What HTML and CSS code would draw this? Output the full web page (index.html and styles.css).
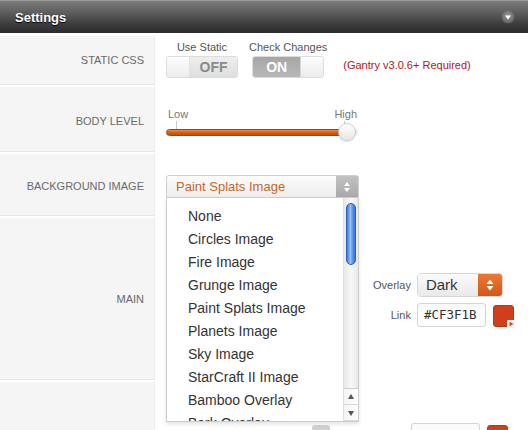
FILE: index.html
```html
<!DOCTYPE html>
<html>
<head>
  <title>Settings</title>
  <link rel="stylesheet" href="styles.css">
</head>
<body>
  <div class="panel">
    <div class="panel-head">
      <h2>Settings</h2>
      <span class="head-toggle">
        <svg width="12" height="12" viewBox="0 0 12 12"><polygon points="3,4.5 9,4.5 6,8.5" fill="#fff"/></svg>
      </span>
    </div>

    <div class="row row-static">
      <div class="row-label">STATIC CSS</div>
      <div class="row-body static-body">
        <div class="switch-group">
          <span class="switch-title">Use Static</span>
          <div class="switch switch-off">
            <span class="switch-blank"></span>
            <span class="switch-text">OFF</span>
          </div>
        </div>
        <div class="switch-group">
          <span class="switch-title">Check Changes</span>
          <div class="switch switch-on">
            <span class="switch-text">ON</span>
            <span class="switch-blank"></span>
          </div>
        </div>
        <span class="note">(Gantry v3.0.6+ Required)</span>
      </div>
    </div>

    <div class="row row-level">
      <div class="row-label">BODY LEVEL</div>
      <div class="row-body level-body">
        <div class="slider">
          <div class="slider-marks">
            <span class="mark">Low</span>
            <span class="mark mark-high">High</span>
          </div>
          <div class="slider-track">
            <div class="slider-fill"></div>
            <div class="slider-knob"></div>
          </div>
        </div>
      </div>
    </div>

    <div class="row row-bg">
      <div class="row-label">BACKGROUND IMAGE</div>
      <div class="row-body bg-body">
        <div class="select-wrap">
          <div class="select">
            <span class="select-value">Paint Splats Image</span>
            <span class="select-arrows">
              <svg width="8" height="12" viewBox="0 0 8 12"><polygon points="1,5 7,5 4,1" fill="#fff"/><polygon points="1,7 7,7 4,11" fill="#fff"/></svg>
            </span>
          </div>
          <div class="select-list">
            <ul>
              <li>None</li>
              <li>Circles Image</li>
              <li>Fire Image</li>
              <li>Grunge Image</li>
              <li>Paint Splats Image</li>
              <li>Planets Image</li>
              <li>Sky Image</li>
              <li>StarCraft II Image</li>
              <li>Bamboo Overlay</li>
              <li>Bark Overlay</li>
            </ul>
            <div class="scrollbar">
              <div class="scroll-thumb"></div>
              <div class="scroll-btn scroll-up">
                <svg width="8" height="8" viewBox="0 0 8 8"><polygon points="1,6 7,6 4,1" fill="#555"/></svg>
              </div>
              <div class="scroll-btn scroll-down">
                <svg width="8" height="8" viewBox="0 0 8 8"><polygon points="1,2 7,2 4,7" fill="#555"/></svg>
              </div>
            </div>
          </div>
        </div>
      </div>
    </div>

    <div class="row row-main">
      <div class="row-label">MAIN</div>
      <div class="row-body main-body">
        <div class="field-grid">
          <span class="field-label">Overlay</span>
          <div class="mini-select">
            <span class="mini-value">Dark</span>
            <span class="mini-arrows">
              <svg width="8" height="14" viewBox="0 0 8 14"><polygon points="0.5,6 7.5,6 4,1.5" fill="#fff"/><polygon points="0.5,8 7.5,8 4,12.5" fill="#fff"/></svg>
            </span>
          </div>
          <span class="field-label">Link</span>
          <div class="color-field">
            <span class="color-input">#CF3F1B</span>
            <span class="swatch">
              <svg class="swatch-corner" width="8" height="8" viewBox="0 0 8 8"><rect width="8" height="8" rx="1" fill="#f3f3f3"/><polygon points="2.5,1.5 6.5,4 2.5,6.5" fill="#d2501e"/></svg>
            </span>
          </div>
        </div>
      </div>
    </div>

    <div class="row row-next">
      <div class="row-label"></div>
      <div class="row-body next-body">
        <span class="hidden-btn"></span>
        <div class="color-field">
          <span class="color-input"></span>
          <span class="swatch"></span>
        </div>
      </div>
    </div>
  </div>
</body>
</html>
```

FILE: styles.css
```css
/* Podstawa */
body {
  margin: 0;
  font-family: "Liberation Sans", Arial, sans-serif;
  background-color: #fff;
  overflow: hidden;
}

.panel {
  width: 528px;
}

/* Naglowek */
.panel-head {
  height: 33px;
  box-sizing: border-box;
  border-top: 1px solid #9a9a9a;
  background: linear-gradient(#7c7c7c, #5e5e5e 35%, #3a3a3a 75%, #2c2c2c);
  display: flex;
  align-items: center;
  justify-content: space-between;
  padding: 0 14px 0 15px;
}

.panel-head h2 {
  margin: 0;
  font-size: 13px;
  color: #fff;
  text-shadow: 0 1px 1px #000;
}

.head-toggle {
  width: 12px;
  height: 12px;
  border-radius: 50%;
  background: radial-gradient(circle at 50% 40%, #9a9a9a, #555);
  box-shadow: 0 0 1px #aaa;
  display: flex;
}

/* Wiersze */
.row {
  display: grid;
  grid-template-columns: 155px 1fr;
}

.row-label {
  background-color: #f5f5f5;
  border-top: 2px solid #fff;
  border-bottom: 1px solid #e6e6e6;
  border-right: 1px solid #ececec;
  display: flex;
  align-items: center;
  justify-content: flex-end;
  padding-right: 10px;
  font-size: 11px;
  color: #6a6a6a;
}

.row-body {
  padding-left: 11px;
}

.row-static { height: 51px; margin-top: 1px; }
.row-level { height: 67px; }
.row-level .row-label { padding-top: 4px; }
.row-bg { height: 64px; }
.row-bg .row-label { padding-top: 2px; }
.row-main { height: 164px; }
.row-next { height: 60px; }

/* Przelaczniki */
.static-body {
  display: flex;
  gap: 11px;
  padding-top: 7px;
}

.switch-group {
  display: flex;
  flex-direction: column;
  align-items: center;
  gap: 2px;
}

.switch-title {
  font-size: 11px;
  line-height: 13px;
  color: #555;
}

.switch {
  width: 72px;
  height: 22px;
  box-sizing: border-box;
  border: 1px solid #dcdcdc;
  border-radius: 3px;
  display: flex;
  overflow: hidden;
}

.switch-blank {
  width: 22px;
  background: linear-gradient(#fdfdfd, #ececec);
}

.switch-text {
  flex: 1;
  display: flex;
  align-items: center;
  justify-content: center;
  font-size: 14px;
  font-weight: bold;
}

.switch-off .switch-text {
  color: #8a8a8a;
  background: linear-gradient(#eeeeee, #dedede);
  border-left: 1px solid #e2e2e2;
}

.switch-on .switch-text {
  color: #fff;
  background: linear-gradient(#a6a6a6, #b8b8b8);
  border-right: 1px solid #d6d6d6;
}

.note {
  font-size: 11px;
  color: #b2121a;
  margin-top: 18px;
  margin-left: 5px;
}

/* Suwak */
.level-body {
  padding-top: 22px;
}

.slider {
  width: 192px;
}

.slider-marks {
  display: flex;
  justify-content: space-between;
  font-size: 11px;
  color: #777;
}

.mark {
  position: relative;
  padding-left: 2px;
  line-height: 14px;
  height: 22px;
}

.mark::after {
  content: "";
  position: absolute;
  left: 10px;
  top: 14px;
  width: 1px;
  height: 8px;
  background-color: #c8c8c8;
}

.mark-high {
  padding-right: 1px;
}

.mark-high::after {
  left: 12px;
}

.slider-track {
  position: relative;
  height: 7px;
  border-radius: 4px;
  background: linear-gradient(#e4e4e4, #f4f4f4);
}

.slider-fill {
  width: 184px;
  height: 7px;
  box-sizing: border-box;
  border: 1px solid #a8400c;
  border-radius: 4px;
  background: linear-gradient(#f08a40, #d65e18 50%, #c24c0c);
}

.slider-knob {
  position: absolute;
  left: 172px;
  top: -6px;
  width: 18px;
  height: 18px;
  box-sizing: border-box;
  border-radius: 50%;
  border: 1px solid #cfcfcf;
  background: linear-gradient(#fff, #e6e6e6);
  box-shadow: 0 1px 1px rgba(0, 0, 0, 0.15);
}

/* Lista wyboru */
.bg-body {
  padding-top: 23px;
}

.select-wrap {
  position: relative;
  width: 193px;
}

.select {
  height: 23px;
  box-sizing: border-box;
  border: 1px solid #cfcfcf;
  border-radius: 3px 3px 0 0;
  display: flex;
  background: linear-gradient(#fdfdfd, #ededed);
}

.select-value {
  flex: 1;
  font-size: 13px;
  color: #c8661f;
  padding-left: 9px;
  line-height: 21px;
}

.select-arrows {
  width: 22px;
  background: linear-gradient(#c2c2c2, #a9a9a9);
  display: flex;
  align-items: center;
  justify-content: center;
}

.select-list {
  position: absolute;
  top: 23px;
  left: 0;
  width: 193px;
  height: 224px;
  box-sizing: border-box;
  border: 1px solid #cdcdcd;
  border-top: none;
  background-color: #fff;
  box-shadow: 0 2px 4px rgba(0, 0, 0, 0.12);
  overflow: hidden;
  z-index: 2;
}

.select-list ul {
  list-style: none;
  margin: 0;
  padding: 7px 0 0 21px;
}

.select-list li {
  font-size: 14px;
  line-height: 23px;
  color: #333;
  white-space: nowrap;
}

.scrollbar {
  position: absolute;
  top: 0;
  right: 0;
  bottom: 0;
  width: 14px;
  background: linear-gradient(90deg, #e8e8e8, #f8f8f8 50%, #e8e8e8);
  border-left: 1px solid #e0e0e0;
  display: flex;
  flex-direction: column;
  align-items: center;
}

.scroll-thumb {
  margin-top: 5px;
  width: 10px;
  height: 62px;
  box-sizing: border-box;
  border: 1px solid #2a5ec8;
  border-radius: 5px;
  background: linear-gradient(90deg, #3f78de, #9cc2f6 45%, #6a9ff0 60%, #3570d8);
}

.scroll-up {
  margin-top: auto;
  border-top: 1px solid #cfcfcf;
}

.scroll-btn {
  width: 14px;
  height: 15px;
  display: flex;
  align-items: center;
  justify-content: center;
  background: linear-gradient(90deg, #f4f4f4, #fff);
  border-bottom: 1px solid #d8d8d8;
}

/* Kolory */
.main-body {
  padding-left: 218px;
  padding-top: 57px;
}

.field-grid {
  display: grid;
  grid-template-columns: auto auto;
  column-gap: 6px;
  row-gap: 6px;
  align-items: center;
  justify-content: start;
}

.field-label {
  justify-self: end;
  font-size: 11px;
  color: #555;
}

.mini-select {
  width: 86px;
  height: 24px;
  box-sizing: border-box;
  border: 1px solid #d6d6d6;
  border-radius: 4px;
  display: flex;
  overflow: hidden;
}

.mini-value {
  flex: 1;
  font-size: 15px;
  color: #333;
  padding-left: 8px;
  line-height: 22px;
  background: linear-gradient(#fbfbfb, #e9e9e9);
}

.mini-arrows {
  width: 24px;
  display: flex;
  align-items: center;
  justify-content: center;
  background: linear-gradient(#ec7a32, #d2561a);
}

.color-field {
  display: flex;
  gap: 7px;
  align-items: center;
}

.color-input {
  width: 69px;
  height: 24px;
  box-sizing: border-box;
  border: 1px solid #d4d4d4;
  border-radius: 3px;
  font-family: "DejaVu Sans Mono", monospace;
  font-size: 12.5px;
  color: #333;
  padding-left: 6px;
  line-height: 22px;
  background: linear-gradient(#fafafa, #fff);
}

.swatch {
  position: relative;
  width: 21px;
  height: 22px;
  box-sizing: border-box;
  border: 1px solid #b23a18;
  border-radius: 3px;
  background-color: #cf3f1b;
  margin-top: 2px;
}

.swatch-corner {
  position: absolute;
  right: -2px;
  bottom: -2px;
}

.next-body {
  padding-top: 43px;
  display: flex;
  align-items: flex-start;
}

.hidden-btn {
  margin-left: 146px;
  margin-top: 2px;
  width: 18px;
  height: 12px;
  border-radius: 3px;
  background-color: #d0d0d0;
}

.next-body .color-field {
  margin-left: 81px;
}
```
